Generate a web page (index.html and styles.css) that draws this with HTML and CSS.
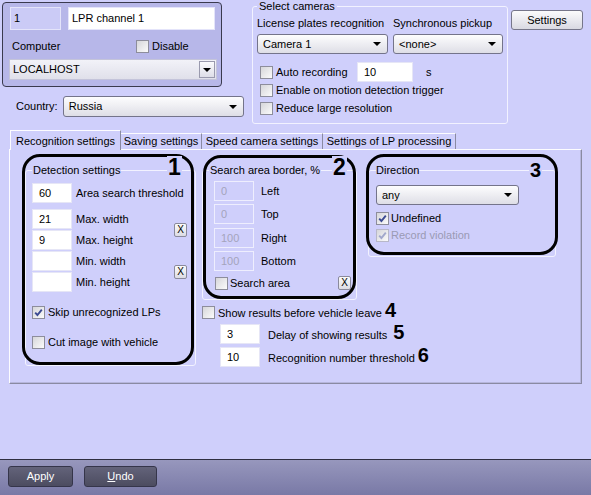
FILE: index.html
```html
<!DOCTYPE html>
<html>
<head>
<meta charset="utf-8">
<title>LPR channel</title>
<link rel="stylesheet" href="styles.css">
</head>
<body>
<div class="app">
  <div class="top">
    <div class="left-col">
      <div class="chan-panel">
        <div class="r1">
          <div class="field id-field">1</div>
          <div class="field name-field">LPR channel 1</div>
        </div>
        <div class="r2">
          <span class="computer">Computer</span>
          <span class="chk"><span class="box"></span><span>Disable</span></span>
        </div>
        <div class="combo-sq">
          <span>LOCALHOST</span>
          <span class="sq-btn"><i class="tri"></i></span>
        </div>
      </div>
      <div class="country">
        <span class="country-lbl">Country:</span>
        <div class="combo country-combo"><span>Russia</span><i class="tri"></i></div>
      </div>
    </div>
    <fieldset class="grp cams">
      <legend>Select cameras</legend>
      <div class="cam-grid">
        <span>License plates recognition</span>
        <span>Synchronous pickup</span>
        <div class="combo"><span>Camera 1</span><i class="tri"></i></div>
        <div class="combo"><span>&lt;none&gt;</span><i class="tri"></i></div>
      </div>
      <div class="chk-row auto"><span class="box"></span><span class="auto-t">Auto recording</span><div class="inp sec">10</div><span class="unit">s</span></div>
      <div class="chk-row enable"><span class="box"></span><span>Enable on motion detection trigger</span></div>
      <div class="chk-row reduce"><span class="box"></span><span>Reduce large resolution</span></div>
    </fieldset>
    <div class="btn settings">Settings</div>
  </div>

  <div class="tabs">
    <div class="tab active t1">Recognition settings</div>
    <div class="tab t2">Saving settings</div>
    <div class="tab t3">Speed camera settings</div>
    <div class="tab t4">Settings of LP processing</div>
  </div>

  <div class="tab-panel">
    <div class="gw gw1">
      <fieldset class="grp g1">
        <legend>Detection settings</legend>
        <div class="irow first"><div class="inp">60</div><span class="il">Area search threshold</span></div>
        <div class="pair p1">
          <div class="pair-rows">
            <div class="irow"><div class="inp">21</div><span class="il">Max. width</span></div>
            <div class="irow gap1"><div class="inp">9</div><span class="il">Max. height</span></div>
          </div>
          <span class="xbtn">X</span>
        </div>
        <div class="pair p2">
          <div class="pair-rows">
            <div class="irow"><div class="inp"></div><span class="il">Min. width</span></div>
            <div class="irow gap1"><div class="inp"></div><span class="il">Min. height</span></div>
          </div>
          <span class="xbtn">X</span>
        </div>
        <div class="chk-row skip"><span class="box on"><svg viewBox="0 0 11 11"><path d="M2.2 5.6 L4.4 8 L8.8 2.6" /></svg></span><span>Skip unrecognized LPs</span></div>
        <div class="chk-row cut"><span class="box"></span><span>Cut image with vehicle</span></div>
      </fieldset>
      <div class="ann ann1"></div>
      <span class="num n1">1</span>
    </div>

    <div class="col2">
      <div class="gw gw2">
        <fieldset class="grp g2">
          <legend>Search area border, %</legend>
          <div class="irow s1"><div class="inp dis">0</div><span class="sl">Left</span></div>
          <div class="irow s2"><div class="inp dis">0</div><span class="sl">Top</span></div>
          <div class="irow s3"><div class="inp dis">100</div><span class="sl">Right</span></div>
          <div class="irow s4"><div class="inp dis">100</div><span class="sl">Bottom</span></div>
          <div class="chk-row area"><span class="box"></span><span>Search area</span><span class="xbtn">X</span></div>
        </fieldset>
        <div class="ann ann2"></div>
        <span class="num n2">2</span>
      </div>
      <div class="chk-row show"><span class="box"></span><span class="nw">Show results before vehicle leave<b class="inum">4</b></span></div>
      <div class="irow d1"><div class="inp">3</div><span class="dl">Delay of showing results<b class="inum i5">5</b></span></div>
      <div class="irow d2"><div class="inp">10</div><span class="dl">Recognition number threshold<b class="inum">6</b></span></div>
    </div>

    <div class="gw gw3">
      <fieldset class="grp g3">
        <legend>Direction</legend>
        <div class="combo any"><span>any</span><i class="tri"></i></div>
        <div class="chk-row und"><span class="box on"><svg viewBox="0 0 11 11"><path d="M2.2 5.6 L4.4 8 L8.8 2.6" /></svg></span><span>Undefined</span></div>
        <div class="chk-row rec dis"><span class="box on"><svg viewBox="0 0 11 11"><path d="M2.2 5.6 L4.4 8 L8.8 2.6" /></svg></span><span>Record violation</span></div>
      </fieldset>
      <div class="ann ann3"></div>
      <span class="num n3">3</span>
    </div>
  </div>

  <div class="footer">
    <div class="dbtn apply">Apply</div>
    <div class="dbtn undo"><u>U</u>ndo</div>
  </div>
</div>
</body>
</html>
```

FILE: styles.css
```css
* { box-sizing: border-box; }
html, body { margin: 0; padding: 0; }
body {
  width: 591px;
  height: 495px;
  overflow: hidden;
  background: #cfcffb;
  font-family: "Liberation Sans", Arial, sans-serif;
  font-size: 11px;
  line-height: 13px;
  color: #000;
}
.app { display: flex; flex-direction: column; height: 495px; }

/* ---------- top area ---------- */
.top { display: flex; align-items: flex-start; height: 130px; flex: none; }
.left-col { margin: 2px 0 0 2px; width: 242px; }
.chan-panel {
  width: 220px;
  height: 85px;
  background: #b7b7e9;
  border: 1px solid #3a3a4e;
  border-radius: 4px;
  padding: 4px 6px 0 7px;
}
.r1 { display: flex; gap: 7px; }
.field {
  height: 23px;
  border: 1px solid #e4e4fa;
  padding: 0 3px;
  line-height: 21px;
}
.id-field { width: 51px; background: #cbcbf6; }
.name-field { width: 147px; background: #fff; }
.r2 {
  display: grid;
  grid-template-columns: 126px auto;
  margin-top: 10px;
  height: 12px;
  align-items: center;
}
.computer { padding-left: 2px; }
.chk { display: flex; align-items: center; gap: 3px; }

.combo-sq {
  margin: 7px 0 0 -1px;
  width: 208px;
  height: 21px;
  border: 1px solid #c4c4da;
  background: linear-gradient(#f2f2f8, #e0e0ea);
  display: flex;
  align-items: center;
  padding-left: 3px;
}
.sq-btn {
  margin-left: auto;
  margin-right: 1px;
  width: 16px;
  height: 17px;
  border: 1px solid #9a9aae;
  background: linear-gradient(#fbfbfd, #dedee8);
  display: flex;
  align-items: center;
  justify-content: center;
}
.tri {
  display: block;
  width: 0;
  height: 0;
  border-left: 4px solid transparent;
  border-right: 4px solid transparent;
  border-top: 4px solid #000;
}

.country { display: flex; align-items: center; margin-top: 9px; padding-left: 14px; }
.country-lbl { width: 47px; }
.combo {
  height: 20px;
  border: 1px solid #74748a;
  border-radius: 3px;
  background: linear-gradient(#fdfdfe, #dedee6);
  display: flex;
  align-items: center;
  justify-content: space-between;
  padding: 0 6px 0 5px;
}
.country-combo { width: 182px; height: 21px; }

.grp {
  margin: 0;
  border: 1px solid #f2f2ff;
  border-radius: 3px;
  min-width: 0;
}
.grp legend { padding: 0 1px; line-height: 13px; }

.cams {
  margin-left: 8px;
  width: 256px;
  height: 124px;
  padding: 0 4px;
}
.cams legend { padding: 0 2px; }
.cam-grid {
  display: grid;
  grid-template-columns: 131px 110px;
  grid-template-rows: 13px 20px;
  column-gap: 5px;
  row-gap: 4px;
  margin-top: 4px;
}
.chk-row { display: flex; align-items: center; height: 16px; gap: 3px; }
.nw { white-space: nowrap; }
.cams .chk-row { margin-left: 3px; }
.cams .auto { margin-top: 8px; height: 20px; }
.cams .reduce { margin-top: 2px; }
.auto-t { width: 78px; }
.unit { margin-left: 10px; }
.box {
  flex: none;
  width: 13px;
  height: 13px;
  border: 1px solid #8d8d9b;
  background: linear-gradient(135deg, #d6d6da, #fbfbfb);
  display: flex;
  align-items: center;
  justify-content: center;
}
.box svg { width: 11px; height: 11px; display: block; }
.box svg path { fill: none; stroke: #3c4a92; stroke-width: 1.9; }
.dis { color: #9a9ab4; }
.chk-row.dis .box { border-color: #b8b8c8; }
.chk-row.dis .box svg path { stroke: #a2a8cc; }

.inp {
  flex: none;
  width: 40px;
  height: 20px;
  background: #fff;
  border: 1px solid #e6e6f6;
  padding: 0 6px;
  line-height: 18px;
}
.inp.sec { width: 56px; }
.inp.dis { background: transparent; border-color: #eeeefe; color: #a4a4bc; }

.btn {
  border: 1px solid #76768a;
  border-radius: 3px;
  background: linear-gradient(#fbfbfc, #d9d9e2);
  display: flex;
  align-items: center;
  justify-content: center;
}
.settings { margin: 10px 0 0 3px; width: 72px; height: 20px; }

/* ---------- tabs ---------- */
.tabs {
  display: flex;
  align-items: flex-end;
  height: 20px;
  margin: 0 0 -1px 10px;
  position: relative;
  z-index: 2;
  flex: none;
}
.tab {
  height: 16px;
  margin-bottom: 1px;
  border-top: 1px solid #fcfcff;
  border-right: 1px solid #8a8aa2;
  text-align: center;
  line-height: 14px;
  background: #cfcffb;
  white-space: nowrap;
}
.tab.active {
  height: 20px;
  margin-bottom: 0;
  border-left: 1px solid #fcfcff;
  padding-top: 3px;
}
.t1 { width: 111px; }
.t2 { width: 81px; }
.t3 { width: 121px; }
.t4 { width: 133px; }

.tab-panel {
  position: relative;
  z-index: 1;
  flex: none;
  margin-left: 9px;
  width: 573px;
  height: 235px;
  border: 1px solid;
  border-color: #fcfcff #8a8aa2 #8a8aa2 #fcfcff;
  box-shadow: inset -1px -1px 0 #b6b6dc;
  padding: 14px 0 0 15px;
  display: flex;
  align-items: flex-start;
}
.gw { position: relative; flex: none; }
.gw .grp { width: 100%; height: 100%; }
.gw1 { width: 171px; height: 202px; }
.g1 { padding: 6px 8px 0 6px; }
.irow { display: flex; align-items: center; height: 20px; }
.il { margin-left: 4px; }
.pair { display: flex; align-items: center; }
.p1 { margin-top: 6px; }
.p2 { margin-top: 1px; }
.gap1 { margin-top: 1px; }
.xbtn {
  margin-left: auto;
  width: 13px;
  height: 14px;
  border: 1px solid #8a8a9c;
  border-radius: 2px;
  background: linear-gradient(#fbfbfb, #dcdce4);
  font-size: 10px;
  line-height: 12px;
  text-align: center;
}
.g1 .skip { margin-top: 12px; }
.g1 .cut { margin-top: 14px; }

.col2 { margin-left: 6px; width: 155px; flex: none; }
.gw2 { width: 155px; height: 136px; }
.g2 { padding: 4px 0 0 11px; }
.g2 legend { margin-left: -5px; }
.sl { margin-left: 7px; }
.s2 { margin-top: 3px; }
.s3 { margin-top: 4px; }
.s4 { margin-top: 3px; }
.g2 .area { margin-top: 5px; height: 14px; padding-left: 1px; gap: 2px; }
.g2 .area .xbtn { margin-right: 5px; }

.col2 .show { margin-top: 4px; }
.d1 { margin-top: 4px; padding-left: 18px; }
.d2 { margin-top: 3px; padding-left: 18px; }
.dl { margin-left: 8px; white-space: nowrap; }
.inum {
  font-size: 20px;
  line-height: 10px;
  margin-left: 3px;
}
.inum.i5 { margin-left: 6px; }

.gw3 { margin-left: 11px; width: 188px; height: 93px; }
.g3 { padding: 8px 0 0 7px; }
.g3 legend { padding: 0; }
.any { width: 143px; }
.g3 .und { margin-top: 5px; gap: 2px; }
.g3 .rec { margin-top: 1px; gap: 2px; }

/* annotation overlays */
.ann {
  position: absolute;
  border: 3px solid #000;
  border-radius: 18px;
  pointer-events: none;
}
.ann1 { left: -3px; top: -10px; width: 172px; height: 211px; }
.ann2 { left: 1px; top: -9px; width: 153px; height: 144px; }
.ann3 { left: -2px; top: -10px; width: 192px; height: 101px; }
.num {
  position: absolute;
  font-weight: bold;
  font-size: 23px;
  line-height: 22px;
  background: #cfcffb;
  padding: 0 1px;
}
.n1 { left: 142px; top: -8px; }
.n2 { left: 130px; top: -8px; }
.n3 { left: 161px; top: -4px; font-size: 20px; line-height: 20px; }

/* ---------- footer ---------- */
.footer {
  margin-top: auto;
  flex: none;
  height: 36px;
  border-top: 1px solid #2f2f40;
  background: linear-gradient(#9797bd, #7979a6);
  padding: 6px 0 0 8px;
  display: flex;
  gap: 11px;
}
.dbtn {
  height: 21px;
  border: 1px solid #35354a;
  border-radius: 3px;
  background: linear-gradient(#63637a, #4c4c60);
  color: #fff;
  display: flex;
  align-items: center;
  justify-content: center;
}
.apply { width: 65px; }
.undo { width: 73px; }
```
